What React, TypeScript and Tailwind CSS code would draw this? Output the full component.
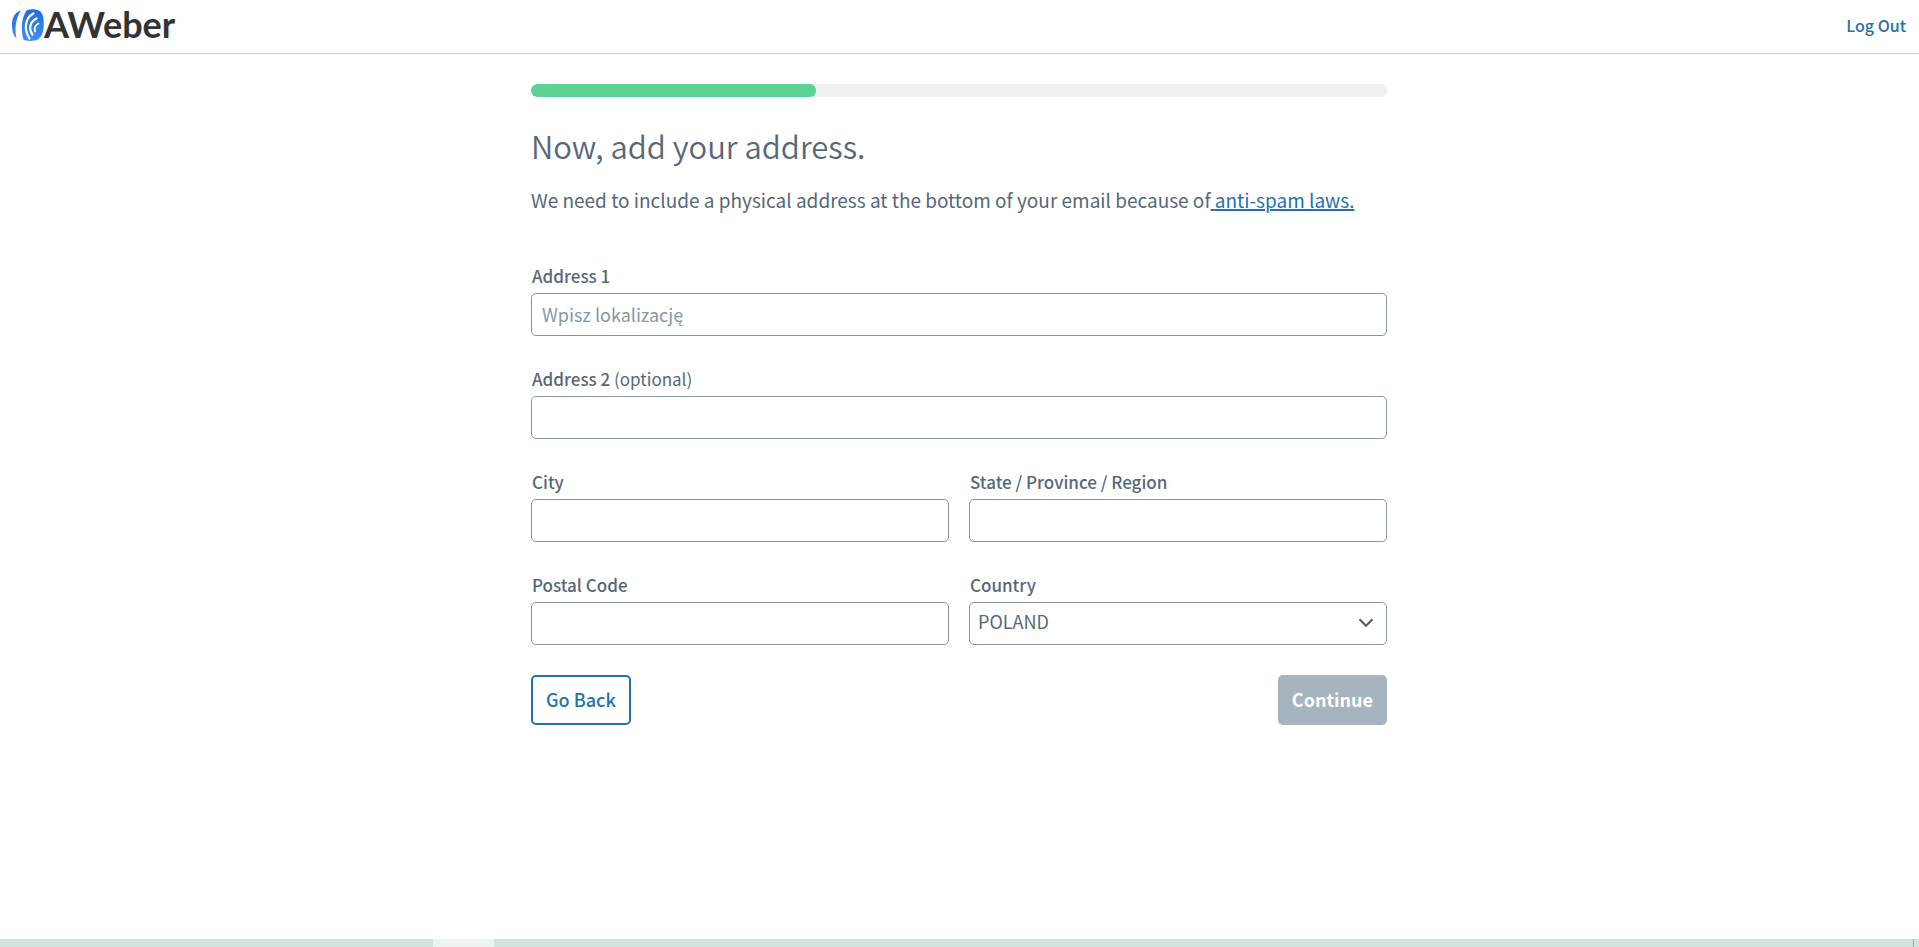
import type { ReactNode } from 'react';

const inputClass =
  'block w-full h-[43px] rounded-[5px] border border-[#8295a1] bg-white px-2.5 pb-px text-lg text-[#566878] placeholder:text-[#8399a5]';

function Field({ id, label, hint, children }: { id: string; label: string; hint?: string; children: ReactNode }) {
  return (
    <div>
      <label htmlFor={id} className="block h-[30px] pl-px text-[17px] leading-[26px] font-medium">
        {label}
        {hint && <span className="font-normal"> {hint}</span>}
      </label>
      {children}
    </div>
  );
}

function Logo() {
  return (
    <a href="#" aria-label="AWeber" className="flex items-center text-[#333334]">
      <svg className="h-8 w-8 shrink-0" viewBox="0 0 32 32" fill="none">
        <defs>
          <linearGradient id="mark" x1="0" y1="0" x2="0" y2="1">
            <stop offset="0" stopColor="#246be0" />
            <stop offset="1" stopColor="#3c91f5" />
          </linearGradient>
        </defs>
        <path d="M9 1.500C3.500 3 0 8 0 15.500C0 22.500 1.500 27 4.500 29C2.500 21 3.500 9 9 1.500Z" fill="url(#mark)" />
        <path d="M15 1C19.500 -0.300 25 -0.300 28.500 2.500C31.500 5.500 32 11 31.700 17C31.400 25 28.500 30.500 23 31.500C18 32.300 14 32 11.500 30.500C8.500 21 9.500 8 15 1Z" fill="url(#mark)" />
        <path d="M21.500 4.500C13 9 11.500 20 17.500 29.500" stroke="#fff" strokeWidth="2.200" strokeLinecap="round" />
        <path d="M24.500 9.500C17.500 13 16.500 20 20.500 25.500" stroke="#fff" strokeWidth="2.200" strokeLinecap="round" />
        <path d="M26.500 14.500C23 16.500 22 19 23 22.500" stroke="#fff" strokeWidth="1.800" strokeLinecap="round" />
      </svg>
      <span className="font-['Lato'] text-4xl leading-[53px] font-bold">AWeber</span>
    </a>
  );
}

export default function App() {
  return (
    <div className="flex min-h-screen flex-col bg-white font-['Noto_Sans_CJK_SC','Open_Sans',sans-serif] text-[#566878]">
      <header className="flex h-[54px] items-center justify-between border-b border-[#bfcccc] pr-[13px] pb-1 pl-3">
        <Logo />
        <a href="#" className="text-base font-medium text-[#2272ac]">
          Log Out
        </a>
      </header>

      <main className="mx-auto w-full max-w-[857px] flex-1 pt-[30px] pr-px">
        <div className="h-[13px] overflow-hidden rounded-md bg-[#eef2f5]">
          <div className="h-full w-1/3 rounded-md bg-[#5ad393]" />
        </div>

        <h1 className="mt-6 text-[31px] leading-[50px] font-[350]">Now, add your address.</h1>
        <p className="mt-[15px] text-[19px] leading-7">
          We need to include a physical address at the bottom of your email because of
          <a href="#" className="text-[#2272ac] underline decoration-2 underline-offset-1">
            {' '}
            anti-spam laws.
          </a>
        </p>

        <form className="mt-[49px]" onSubmit={(e) => e.preventDefault()}>
          <div className="space-y-[30px]">
            <Field id="address1" label="Address 1">
              <input id="address1" type="text" placeholder="Wpisz lokalizację" className={inputClass} />
            </Field>
            <Field id="address2" label="Address 2" hint="(optional)">
              <input id="address2" type="text" className={inputClass} />
            </Field>
            <div className="grid grid-cols-2 gap-x-5 gap-y-[30px]">
              <Field id="city" label="City">
                <input id="city" type="text" className={inputClass} />
              </Field>
              <Field id="state" label="State / Province / Region">
                <input id="state" type="text" className={inputClass} />
              </Field>
              <Field id="postal" label="Postal Code">
                <input id="postal" type="text" className={inputClass} />
              </Field>
              <Field id="country" label="Country">
                <div className="relative">
                  <select
                    id="country"
                    defaultValue="PL"
                    className="block h-[43px] w-full appearance-none rounded-[5px] border border-[#8295a1] bg-white px-2 pb-1.5 text-lg"
                  >
                    <option value="PL">POLAND</option>
                  </select>
                  <svg
                    className="pointer-events-none absolute top-4 right-[13px] h-[10px] w-4"
                    viewBox="0 0 16 10"
                    fill="none"
                    stroke="#5a5a5a"
                    strokeWidth="2"
                  >
                    <path d="M1.500 1.200L8 7.800L14.500 1.200" />
                  </svg>
                </div>
              </Field>
            </div>
          </div>

          <div className="mt-[30px] flex justify-between">
            <button
              type="button"
              className="h-[50px] rounded-[5px] border-2 border-[#2074b0] px-[13px] pb-[3px] text-lg font-medium text-[#2272ac]"
            >
              Go Back
            </button>
            <button type="submit" disabled className="h-[50px] rounded-[5px] bg-[#a5b4be] px-3.5 pb-[3px] text-lg font-bold text-white">
              Continue
            </button>
          </div>
        </form>
      </main>

      <footer className="flex h-2 bg-[#d1e2df] pl-[433px]">
        <div className="w-[61px] bg-[#edf3f1]" />
        <div className="mr-[5px] ml-auto w-px bg-[#9bb0ad]" />
      </footer>
    </div>
  );
}
